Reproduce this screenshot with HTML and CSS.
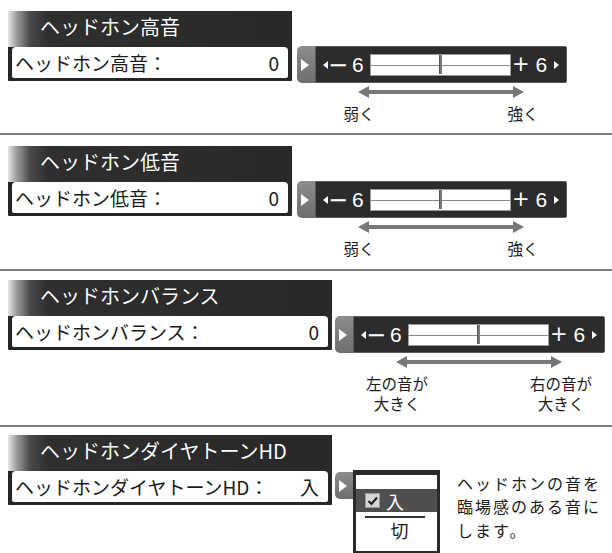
FILE: index.html
```html
<!DOCTYPE html>
<html lang="ja">
<head>
<meta charset="utf-8">
<link rel="stylesheet" href="styles.css">
</head>
<body>
<div class="page">

  <section class="sec s1">
    <div class="row">
      <div class="panel narrow">
        <div class="ptitle">ヘッドホン高音</div>
        <div class="pbox"><span>ヘッドホン高音：</span><span class="val">0</span></div>
      </div>
      <div class="ctrl">
        <div class="slider">
          <div class="tab"><svg width="8" height="12" viewBox="0 0 8 12"><polygon points="0,0 8,6 0,12" fill="#fff"/></svg></div>
          <div class="bar">
            <div class="lcell"><svg class="tri" width="5" height="8" viewBox="0 0 5 8"><polygon points="5,0 0,4 5,8" fill="#fff"/></svg><span class="sym minus">−</span><span class="num">6</span></div>
            <div class="track"><div class="mid"></div><div class="thumb"></div></div>
            <div class="rcell"><span class="sym">+</span><span class="num">6</span><svg class="tri" width="5" height="8" viewBox="0 0 5 8"><polygon points="0,0 5,4 0,8" fill="#fff"/></svg></div>
          </div>
        </div>
        <svg class="arrow" width="166" height="12" viewBox="0 0 166 12"><polygon points="0,6 11,0 11,4 155,4 155,0 166,6 155,12 155,8 11,8 11,12" fill="#777"/></svg>
        <div class="labels"><div class="lab">弱く</div><div class="lab">強く</div></div>
      </div>
    </div>
  </section>
  <div class="sep"></div>

  <section class="sec s2">
    <div class="row">
      <div class="panel narrow">
        <div class="ptitle">ヘッドホン低音</div>
        <div class="pbox"><span>ヘッドホン低音：</span><span class="val">0</span></div>
      </div>
      <div class="ctrl">
        <div class="slider">
          <div class="tab"><svg width="8" height="12" viewBox="0 0 8 12"><polygon points="0,0 8,6 0,12" fill="#fff"/></svg></div>
          <div class="bar">
            <div class="lcell"><svg class="tri" width="5" height="8" viewBox="0 0 5 8"><polygon points="5,0 0,4 5,8" fill="#fff"/></svg><span class="sym minus">−</span><span class="num">6</span></div>
            <div class="track"><div class="mid"></div><div class="thumb"></div></div>
            <div class="rcell"><span class="sym">+</span><span class="num">6</span><svg class="tri" width="5" height="8" viewBox="0 0 5 8"><polygon points="0,0 5,4 0,8" fill="#fff"/></svg></div>
          </div>
        </div>
        <svg class="arrow" width="166" height="12" viewBox="0 0 166 12"><polygon points="0,6 11,0 11,4 155,4 155,0 166,6 155,12 155,8 11,8 11,12" fill="#777"/></svg>
        <div class="labels"><div class="lab">弱く</div><div class="lab">強く</div></div>
      </div>
    </div>
  </section>
  <div class="sep"></div>

  <section class="sec s3">
    <div class="row">
      <div class="panel wide">
        <div class="ptitle">ヘッドホンバランス</div>
        <div class="pbox"><span>ヘッドホンバランス：</span><span class="val">0</span></div>
      </div>
      <div class="ctrl ctrl-wide">
        <div class="slider">
          <div class="tab"><svg width="8" height="12" viewBox="0 0 8 12"><polygon points="0,0 8,6 0,12" fill="#fff"/></svg></div>
          <div class="bar">
            <div class="lcell"><svg class="tri" width="5" height="8" viewBox="0 0 5 8"><polygon points="5,0 0,4 5,8" fill="#fff"/></svg><span class="sym minus">−</span><span class="num">6</span></div>
            <div class="track"><div class="mid"></div><div class="thumb"></div></div>
            <div class="rcell"><span class="sym">+</span><span class="num">6</span><svg class="tri" width="5" height="8" viewBox="0 0 5 8"><polygon points="0,0 5,4 0,8" fill="#fff"/></svg></div>
          </div>
        </div>
        <svg class="arrow" width="166" height="12" viewBox="0 0 166 12"><polygon points="0,6 11,0 11,4 155,4 155,0 166,6 155,12 155,8 11,8 11,12" fill="#777"/></svg>
        <div class="labels"><div class="lab">左の音が<br>大きく</div><div class="lab">右の音が<br>大きく</div></div>
      </div>
    </div>
  </section>
  <div class="sep"></div>

  <section class="sec s4">
    <div class="row">
      <div class="panel wide">
        <div class="ptitle">ヘッドホンダイヤトーンHD</div>
        <div class="pbox"><span>ヘッドホンダイヤトーンHD：</span><span class="val">入</span></div>
      </div>
      <div class="dd">
        <div class="tab tab-small"><svg width="8" height="12" viewBox="0 0 8 12"><polygon points="0,0 8,6 0,12" fill="#fff"/></svg></div>
        <div class="ddbox">
          <div class="ddsel"><span class="chk"><svg width="13" height="13" viewBox="0 0 13 13"><path d="M2.5 7 L5.5 10 L11 3.5" fill="none" stroke="#222" stroke-width="2.2"/></svg></span><span>入</span></div>
          <div class="ddline"></div>
          <div class="ddopt">切</div>
        </div>
      </div>
      <p class="desc">ヘッドホンの音を<br>臨場感のある音に<br>します。</p>
    </div>
  </section>

</div>
</body>
</html>
```
FILE: styles.css
```css
* { box-sizing: border-box; }
html, body { margin: 0; padding: 0; background: #fff; }
body {
  width: 612px;
  height: 553px;
  overflow: hidden;
  font-family: "Noto Sans CJK JP", "Noto Sans", sans-serif;
  color: #1a1a1a;
}
.sec { padding-left: 8px; }
.s1 { height: 133px; padding-top: 11px; }
.s2 { height: 134px; padding-top: 11px; }
.s3 { height: 154px; padding-top: 9px; }
.s4 { height: 128px; padding-top: 8px; }
.sep { height: 2px; background: #7e7e7e; }

.row { display: flex; align-items: flex-start; }

.panel {
  background: #262626;
  padding: 0 4px 3px 4px;
  border-radius: 1px;
}
.narrow { width: 284px; }
.wide { width: 324px; }
.ptitle {
  height: 36px;
  margin: 0 -4px;
  padding: 2px 0 0 32px;
  line-height: 27px;
  font-size: 20px;
  color: #fff;
  white-space: nowrap;
  background: linear-gradient(to right, #e6e6e6 0, #9a9a9a 9px, #4a4a4a 22px, #2f2f2f 40px, #282828 100%);
  text-shadow: 0 0 1px rgba(0,0,0,0.6);
}
.pbox {
  height: 31px;
  background: #fff;
  border-radius: 4px 4px 2px 2px;
  display: flex;
  justify-content: space-between;
  align-items: center;
  padding: 0 9px 0 3px;
  font-size: 19px;
  line-height: 1;
  white-space: nowrap;
}
.val { font-size: 19px; }

.ctrl { margin-left: 5px; margin-top: 35px; }
.ctrl-wide { margin-left: 3px; margin-top: 36px; }

.slider { display: flex; height: 37px; }
.tab {
  width: 18px;
  background: linear-gradient(to bottom, #8c8c8c, #6e6e6e);
  border-radius: 5px 0 0 5px;
  display: flex;
  align-items: center;
  justify-content: center;
  padding-right: 2px;
}
.bar {
  width: 252px;
  background: #2c2c2c;
  border: 1px solid #5a5a5a;
  border-radius: 0 2px 2px 0;
  display: grid;
  grid-template-columns: 54px 141px 1fr;
  align-items: center;
  color: #fff;
}
.lcell, .rcell {
  display: flex;
  align-items: center;
  height: 100%;
}
.lcell { padding-left: 7px; }
.rcell { padding-left: 1px; }
.sym {
  font-family: "DejaVu Sans", sans-serif;
  font-size: 21px;
  line-height: 1;
}
.lcell .minus {
  font-size: 24px;
  margin: 0 4px 0 0;
}
.num {
  font-family: "Liberation Sans", sans-serif;
  font-size: 21px;
  line-height: 1;
}
.rcell .sym { margin-right: 6px; }
.rcell .tri { margin-left: 7px; }
.track {
  height: 22px;
  background: #fff;
  border: 1px solid #9a9a9a;
  position: relative;
  display: flex;
  align-items: center;
  justify-content: center;
}
.mid { position: absolute; left: 0; right: 0; top: 10px; height: 1px; background: #8a8a8a; }
.thumb {
  position: relative;
  width: 3px;
  height: 19px;
  background: #7a7a7a;
  border-left: 1px solid #555;
}

.arrow { display: block; margin: 3px 0 0 61px; }
.labels {
  display: flex;
  justify-content: space-between;
  width: 246px;
  margin: 5px 0 0 21px;
}
.lab {
  width: 82px;
  text-align: center;
  font-size: 15.5px;
  line-height: 20px;
}

.dd { display: flex; align-items: flex-start; margin-left: 3px; margin-top: 35px; }
.tab-small { height: 27px; margin-top: 2px; }
.ddbox {
  width: 87px;
  height: 84px;
  border: 3px solid #2a2a2a;
  border-top-width: 5px;
  padding-top: 14px;
  background: #fff;
}
.ddsel {
  height: 23px;
  background: #4f4f4f;
  color: #fff;
  display: flex;
  align-items: center;
  padding-left: 9px;
  font-size: 18px;
  line-height: 1;
}
.chk {
  width: 15px;
  height: 15px;
  background: #d6d6d6;
  border: 1px solid #999;
  display: flex;
  align-items: center;
  justify-content: center;
  margin-right: 6px;
}
.ddline { height: 2px; background: #333; margin: 4px 12px 0 9px; }
.ddopt {
  text-align: center;
  font-size: 18px;
  line-height: 24px;
  padding-left: 6px;
}
.desc {
  margin: 37px 0 0 17px;
  font-size: 16px;
  letter-spacing: 2px;
  line-height: 23.3px;
  white-space: nowrap;
}
```
